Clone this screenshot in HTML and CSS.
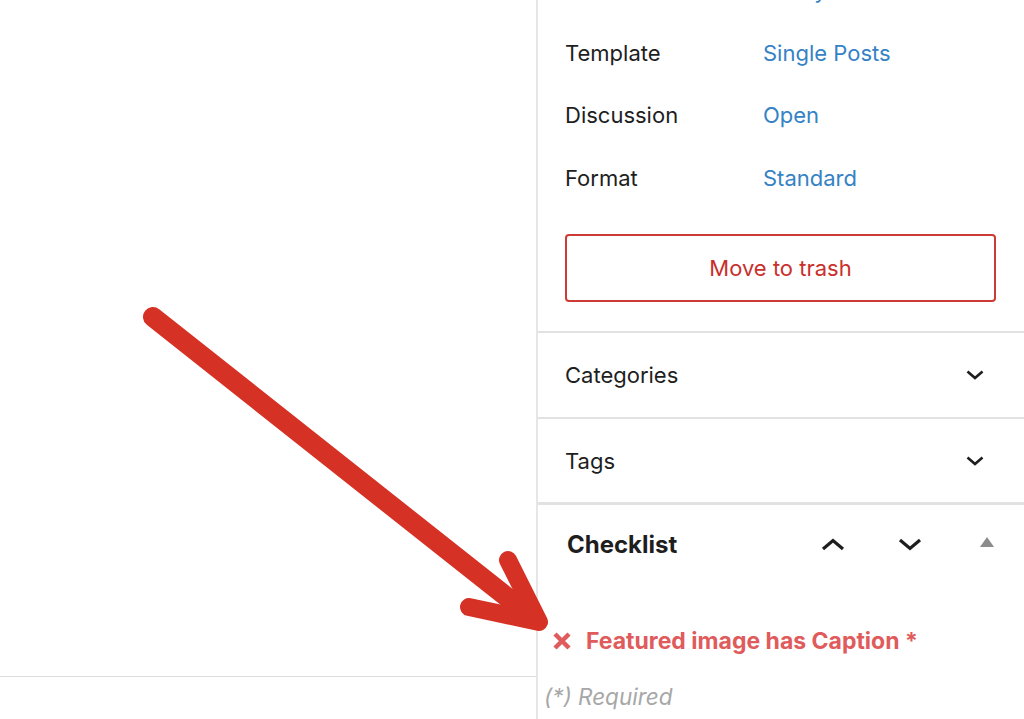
FILE: index.html
```html
<!DOCTYPE html>
<html lang="en">
<head>
    <meta charset="UTF-8">
    <meta name="viewport" content="width=device-width, initial-scale=1.0">
    <title>Edit Post</title>
    <link rel="stylesheet" href="styles.css">
</head>
<body>
    <main class="editor">
        <div class="editor-canvas"></div>
        <div class="editor-footer"></div>
    </main>

    <aside class="sidebar">
        <!-- Post summary -->
        <div class="panel summary">
            <div class="summary-row">
                <span class="summary-label">Publish</span>
                <a class="summary-value" href="#">Today</a>
            </div>
            <div class="summary-row">
                <span class="summary-label">Template</span>
                <a class="summary-value" href="#">Single Posts</a>
            </div>
            <div class="summary-row">
                <span class="summary-label">Discussion</span>
                <a class="summary-value" href="#">Open</a>
            </div>
            <div class="summary-row">
                <span class="summary-label">Format</span>
                <a class="summary-value" href="#">Standard</a>
            </div>
            <button class="trash-button">Move to trash</button>
        </div>

        <div class="panel toggle-panel">
            <span class="panel-title">Categories</span>
            <svg class="chevron" viewBox="0 0 18 10"><path d="M1.5 1.5 L9 8 L16.5 1.5"/></svg>
        </div>

        <div class="panel toggle-panel">
            <span class="panel-title">Tags</span>
            <svg class="chevron" viewBox="0 0 18 10"><path d="M1.5 1.5 L9 8 L16.5 1.5"/></svg>
        </div>

        <!-- Checklist meta box -->
        <div class="panel checklist">
            <div class="checklist-header">
                <h2>Checklist</h2>
                <div class="checklist-actions">
                    <button class="icon-button"><svg class="chevron large" viewBox="0 0 24 13"><path d="M2 11 L12 2.5 L22 11"/></svg></button>
                    <button class="icon-button"><svg class="chevron large" viewBox="0 0 24 13"><path d="M2 2 L12 10.5 L22 2"/></svg></button>
                    <button class="icon-button"><span class="triangle"></span></button>
                </div>
            </div>
            <ul class="checklist-items">
                <li class="check-item failed">
                    <svg class="cross" viewBox="0 0 20 18"><path d="M3 2 L17 16 M17 2 L3 16"/></svg>
                    <span>Featured image has Caption *</span>
                </li>
            </ul>
            <p class="required-note">(*) Required</p>
        </div>
    </aside>

    <!-- Annotation arrow drawn over the screenshot -->
    <svg class="annotation" viewBox="0 0 1024 719">
        <line x1="153" y1="317" x2="532" y2="617"/>
        <polyline points="508,560 539,622 469,607"/>
    </svg>
</body>
</html>
```

FILE: styles.css
```css
body {
    margin: 0;
    padding: 0;
    font-family: Inter, "Noto Sans", Arial, sans-serif;
    color: #1e1e1e;
    background-color: white;
    display: flex;
    height: 100vh;
    overflow: hidden;
}
.editor {
    width: 536px;
    display: flex;
    flex-direction: column;
}
.editor-canvas {
    height: 676px;
}
.editor-footer {
    flex: 1;
    border-top: 1px solid #dcdcdc;
}
.sidebar {
    flex: 1;
    border-left: 2px solid #e6e6e6;
    display: flex;
    flex-direction: column;
}
.panel {
    border-top: 2px solid #e2e2e2;
}

/* Summary */
.summary {
    border-top: none;
    margin-top: -41px;
    padding: 0 28px 29px 27px;
}
.summary-row {
    display: flex;
    align-items: center;
    height: 62.5px;
    font-size: 22px;
}
.summary-label {
    width: 198px;
}
.summary-value {
    color: #3582c4;
    text-decoration: none;
}
.trash-button {
    display: block;
    width: 100%;
    height: 68px;
    margin-top: 25px;
    background-color: white;
    border: 2px solid #cc3b35;
    border-radius: 4px;
    color: #c9302c;
    font-family: inherit;
    font-size: 22px;
    cursor: pointer;
}

/* Collapsed panels */
.toggle-panel {
    display: flex;
    align-items: center;
    justify-content: space-between;
    height: 84px;
    padding: 0 40px 0 27px;
    font-size: 22px;
}
.toggle-panel + .toggle-panel {
    height: 83px;
}
.chevron {
    width: 18px;
    height: 10px;
    fill: none;
    stroke: #1e1e1e;
    stroke-width: 2.6;
}
.chevron.large {
    width: 24px;
    height: 13px;
    stroke-width: 3.2;
}

/* Checklist */
.checklist {
    border-top-width: 3px;
}
.checklist-header {
    display: flex;
    align-items: center;
    justify-content: space-between;
    height: 78px;
    padding: 0 15px 0 29px;
}
.checklist-header h2 {
    margin: 0;
    font-size: 24px;
    font-weight: 700;
}
.checklist-actions {
    display: flex;
    gap: 33px;
}
.icon-button {
    width: 44px;
    height: 44px;
    padding: 0;
    border: none;
    background: none;
    display: flex;
    align-items: center;
    justify-content: center;
}
.triangle {
    width: 0;
    height: 0;
    border-left: 7px solid transparent;
    border-right: 7px solid transparent;
    border-bottom: 10px solid #8c8c8c;
    margin-top: -4px;
}
.checklist-items {
    list-style: none;
    margin: 43px 0 0;
    padding: 0 0 0 14px;
}
.check-item {
    display: flex;
    align-items: center;
    gap: 14px;
    height: 30px;
    font-size: 23px;
    font-weight: 700;
}
.check-item.failed {
    color: #e05b5b;
}
.cross {
    width: 20px;
    height: 18px;
    fill: none;
    stroke: #e05b5b;
    stroke-width: 4.5;
}
.required-note {
    margin: 26px 0 0 6px;
    line-height: 30px;
    font-size: 22.5px;
    font-style: italic;
    color: #a7a7a7;
}

/* Annotation */
.annotation {
    position: absolute;
    left: 0;
    top: 0;
    width: 1024px;
    height: 719px;
    pointer-events: none;
    fill: none;
    stroke: #d63125;
    stroke-linecap: round;
    stroke-linejoin: round;
}
.annotation line {
    stroke-width: 20;
}
.annotation polyline {
    stroke-width: 18;
}
```
